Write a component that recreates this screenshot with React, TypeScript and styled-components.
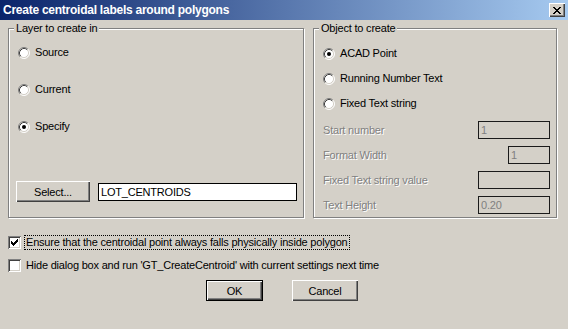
import styled, { createGlobalStyle } from "styled-components"

const GlobalStyle = createGlobalStyle`
  html, body {
    margin: 0;
    padding: 0;
    background: #d4d0c8;
  }
  * {
    box-sizing: border-box;
  }
`

const Window = styled.div`
  width: 568px;
  height: 329px;
  background: #d4d0c8;
  display: flex;
  flex-direction: column;
  font-family: "Liberation Sans", Arial, sans-serif;
  font-size: 11px;
  letter-spacing: -0.2px;
  color: #000;
  overflow: hidden;
`

const TitleBar = styled.div`
  height: 20px;
  display: flex;
  align-items: center;
  justify-content: space-between;
  padding: 0 3px 0 3px;
  background: linear-gradient(to right, #0a246a, #a6caf0);
  color: #fff;
  font-weight: bold;
  font-size: 12px;
  letter-spacing: -0.25px;
`

const CloseButton = styled.div`
  width: 16px;
  height: 14px;
  display: grid;
  place-items: center;
  background: #d4d0c8;
  box-shadow: inset 1px 1px 0 #fff, inset -1px -1px 0 #404040,
    inset -2px -2px 0 #808080;
`

const Body = styled.div`
  display: flex;
  flex-direction: column;
  padding: 2px 8px 0 8px;
`

const GroupRow = styled.div`
  display: flex;
  gap: 9px;
`

const GroupBox = styled.fieldset<{ $width: number }>`
  width: ${({ $width }) => $width}px;
  height: 196px;
  margin: 0;
  padding: 0;
  border: 1px solid #808080;
  box-shadow: inset 1px 1px 0 #fff, 1px 1px 0 #fff;
  min-width: 0;
`

const Legend = styled.legend`
  margin-left: 5px;
  padding: 0 2px;
  line-height: 13px;
  background: #d4d0c8;
`

const LeftContent = styled.div`
  display: flex;
  flex-direction: column;
  padding: 11px 6px 0 7px;
`

const RightContent = styled.div`
  display: flex;
  flex-direction: column;
  padding: 12px 6px 0 9px;
`

const RadioStack = styled.div<{ $gap: number }>`
  display: flex;
  flex-direction: column;
  gap: ${({ $gap }) => $gap}px;
`

const RadioRow = styled.div<{ $indent?: number }>`
  display: flex;
  align-items: center;
  gap: 5px;
  height: 13px;
  line-height: 13px;
  padding-left: ${({ $indent }) => $indent ?? 0}px;
`

const SelectRow = styled.div`
  display: flex;
  align-items: center;
  gap: 8px;
  margin-top: 48px;
`

const Button = styled.button<{ $width: number; $default?: boolean }>`
  width: ${({ $width }) => $width}px;
  height: 21px;
  padding: 0;
  background: #d4d0c8;
  font-family: "Liberation Sans", Arial, sans-serif;
  font-size: 11px;
  letter-spacing: -0.2px;
  color: #000;
  border: ${({ $default }) => ($default ? "1px solid #000" : "none")};
  box-shadow: inset 1px 1px 0 #fff, inset -1px -1px 0 #404040,
    inset -2px -2px 0 #808080;
`

const TextField = styled.div<{ $width: number; $disabled?: boolean }>`
  width: ${({ $width }) => $width}px;
  height: 18px;
  line-height: 16px;
  padding: 0 2px;
  border: 1px solid ${({ $disabled }) => ($disabled ? "#1a1a1a" : "#000")};
  background: ${({ $disabled }) => ($disabled ? "#d4d0c8" : "#fff")};
  color: ${({ $disabled }) => ($disabled ? "#808080" : "#000")};
`

const FieldStack = styled.div`
  display: flex;
  flex-direction: column;
  gap: 7px;
  margin-top: 11px;
`

const FieldRow = styled.div`
  display: flex;
  align-items: center;
  justify-content: space-between;
`

const DisabledLabel = styled.span`
  color: #808080;
  text-shadow: 1px 1px 0 #fff;
`

const CheckStack = styled.div`
  display: flex;
  flex-direction: column;
  gap: 8px;
  margin-top: 17px;
`

const CheckRow = styled.div`
  display: flex;
  align-items: center;
  gap: 4px;
  height: 15px;
`

const CheckLabel = styled.span<{ $focused?: boolean }>`
  padding: 0 1px;
  line-height: 13px;
  outline: ${({ $focused }) => ($focused ? "1px dotted #000" : "none")};
  outline-offset: 0;
`

const CheckBoxFrame = styled.span`
  width: 13px;
  height: 13px;
  display: block;
  background: #fff;
  box-shadow: inset 1px 1px 0 #808080, inset -1px -1px 0 #fff,
    inset 2px 2px 0 #404040, inset -2px -2px 0 #d4d0c8;
`

const ButtonRow = styled.div`
  display: flex;
  justify-content: center;
  gap: 29px;
  margin-top: 7px;
  padding-right: 4px;
`

const Radio = ({ checked }: { checked?: boolean }) => (
  <svg width="12" height="12" viewBox="0 0 12 12">
    <circle cx="6" cy="6" r="5" fill="#fff" />
    <path d="M2.11 9.89 A5.5 5.5 0 0 1 9.89 2.11" stroke="#808080" fill="none" />
    <path d="M9.89 2.11 A5.5 5.5 0 0 1 2.11 9.89" stroke="#fff" fill="none" />
    <path d="M2.82 9.18 A4.5 4.5 0 0 1 9.18 2.82" stroke="#404040" fill="none" />
    <path d="M9.18 2.82 A4.5 4.5 0 0 1 2.82 9.18" stroke="#d4d0c8" fill="none" />
    {checked && <circle cx="6" cy="6" r="2" fill="#000" />}
  </svg>
)

const CheckBox = ({ checked }: { checked?: boolean }) => (
  <CheckBoxFrame>
    {checked && (
      <svg width="13" height="13" viewBox="0 0 13 13" shapeRendering="crispEdges">
        <path
          d="M3 5h1v3h-1z M4 6h1v3h-1z M5 7h1v3h-1z M6 6h1v3h-1z M7 5h1v3h-1z M8 4h1v3h-1z M9 3h1v3h-1z"
          fill="#000"
        />
      </svg>
    )}
  </CheckBoxFrame>
)

const CloseIcon = () => (
  <svg width="8" height="7" viewBox="0 0 8 7" shapeRendering="crispEdges">
    <path
      d="M0 0h2v1h-2z M6 0h2v1h-2z M1 1h2v1h-2z M5 1h2v1h-2z M2 2h4v1h-4z M3 3h2v1h-2z M2 4h4v1h-4z M1 5h2v1h-2z M5 5h2v1h-2z M0 6h2v1h-2z M6 6h2v1h-2z"
      fill="#000"
    />
  </svg>
)

const fields = [
  { label: "Start number", value: "1", width: 72 },
  { label: "Format Width", value: "1", width: 42 },
  { label: "Fixed Text string value", value: "", width: 72 },
  { label: "Text Height", value: "0.20", width: 72 },
]

const App = () => {
  return (
    <>
      <GlobalStyle />
      <Window>
        <TitleBar>
          <span>Create centroidal labels around polygons</span>
          <CloseButton>
            <CloseIcon />
          </CloseButton>
        </TitleBar>
        <Body>
          <GroupRow>
            <GroupBox $width={296}>
              <Legend>Layer to create in</Legend>
              <LeftContent>
                <RadioStack $gap={24}>
                  <RadioRow $indent={2}>
                    <Radio />
                    Source
                  </RadioRow>
                  <RadioRow $indent={2}>
                    <Radio />
                    Current
                  </RadioRow>
                  <RadioRow $indent={2}>
                    <Radio checked />
                    Specify
                  </RadioRow>
                </RadioStack>
                <SelectRow>
                  <Button $width={74}>Select...</Button>
                  <TextField $width={199}>LOT_CENTROIDS</TextField>
                </SelectRow>
              </LeftContent>
            </GroupBox>
            <GroupBox $width={244}>
              <Legend>Object to create</Legend>
              <RightContent>
                <RadioStack $gap={12}>
                  <RadioRow>
                    <Radio checked />
                    ACAD Point
                  </RadioRow>
                  <RadioRow>
                    <Radio />
                    Running Number Text
                  </RadioRow>
                  <RadioRow>
                    <Radio />
                    Fixed Text string
                  </RadioRow>
                </RadioStack>
                <FieldStack>
                  {fields.map((f) => (
                    <FieldRow key={f.label}>
                      <DisabledLabel>{f.label}</DisabledLabel>
                      <TextField $width={f.width} $disabled>
                        {f.value}
                      </TextField>
                    </FieldRow>
                  ))}
                </FieldStack>
              </RightContent>
            </GroupBox>
          </GroupRow>
          <CheckStack>
            <CheckRow>
              <CheckBox checked />
              <CheckLabel $focused>
                Ensure that the centroidal point always falls physically inside polygon
              </CheckLabel>
            </CheckRow>
            <CheckRow>
              <CheckBox />
              <CheckLabel>
                Hide dialog box and run 'GT_CreateCentroid' with current settings next time
              </CheckLabel>
            </CheckRow>
          </CheckStack>
          <ButtonRow>
            <Button $width={57} $default>
              OK
            </Button>
            <Button $width={66}>Cancel</Button>
          </ButtonRow>
        </Body>
      </Window>
    </>
  )
}

export default App
